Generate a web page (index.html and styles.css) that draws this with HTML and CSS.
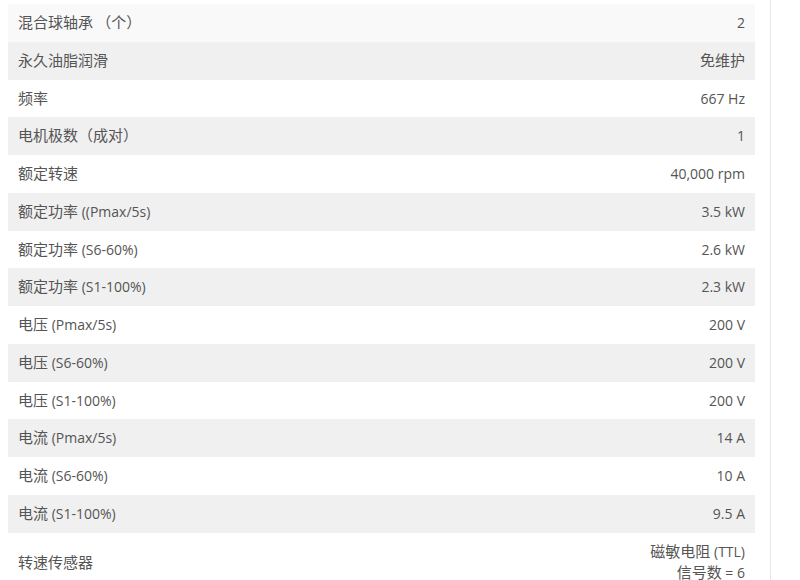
FILE: index.html
```
<!DOCTYPE html>
<html lang="zh-CN">
<head>
<meta charset="utf-8">
<link rel="stylesheet" href="styles.css">
</head>
<body>
<div class="page">
  <div class="main">
    <table class="specs">
      <tbody>
        <tr class="first"><td><span class="zh">混合球轴承 （个）</span></td><td class="val">2</td></tr>
        <tr class="alt"><td><span class="zh">永久油脂润滑</span></td><td class="val"><span class="zh">免维护</span></td></tr>
        <tr><td><span class="zh">频率</span></td><td class="val">667 Hz</td></tr>
        <tr class="alt"><td><span class="zh">电机极数（成对）</span></td><td class="val">1</td></tr>
        <tr><td><span class="zh">额定转速</span></td><td class="val">40,000 rpm</td></tr>
        <tr class="alt"><td><span class="zh">额定功率</span> ((Pmax/5s)</td><td class="val">3.5 kW</td></tr>
        <tr><td><span class="zh">额定功率</span> (S6-60%)</td><td class="val">2.6 kW</td></tr>
        <tr class="alt"><td><span class="zh">额定功率</span> (S1-100%)</td><td class="val">2.3 kW</td></tr>
        <tr><td><span class="zh">电压</span> (Pmax/5s)</td><td class="val">200 V</td></tr>
        <tr class="alt"><td><span class="zh">电压</span> (S6-60%)</td><td class="val">200 V</td></tr>
        <tr><td><span class="zh">电压</span> (S1-100%)</td><td class="val">200 V</td></tr>
        <tr class="alt"><td><span class="zh">电流</span> (Pmax/5s)</td><td class="val">14 A</td></tr>
        <tr><td><span class="zh">电流</span> (S6-60%)</td><td class="val">10 A</td></tr>
        <tr class="alt"><td><span class="zh">电流</span> (S1-100%)</td><td class="val">9.5 A</td></tr>
        <tr><td><span class="zh">转速传感器</span></td><td class="val"><span class="zh">磁敏电阻</span> (TTL)<br><span class="zh">信号数</span> = 6</td></tr>
      </tbody>
    </table>
  </div>
  <div class="side"></div>
</div>
</body>
</html>
```
FILE: styles.css
```
html, body {
  margin: 0;
  padding: 0;
  background: #fff;
}
body {
  font-family: "Open Sans", "Noto Sans CJK SC", sans-serif;
  font-size: 14px;
  color: #555;
  overflow: hidden;
}
.page {
  display: flex;
  padding: 4px 0 0 8px;
  height: 580px;
  box-sizing: border-box;
}
.main {
  width: 747px;
  flex: none;
}
.side {
  margin-left: 15px;
  border-left: 1px solid #e6e6e6;
  flex: 1;
  margin-top: -4px;
}
.specs {
  width: 100%;
  border-collapse: collapse;
}
.specs td {
  padding: 8px 10px;
  line-height: 21.77px;
  vertical-align: middle;
}
.specs td.val {
  text-align: right;
}
.zh {
  font-family: "Noto Sans CJK SC", sans-serif;
  font-size: 15px;
  line-height: 1;
}
.specs tr.first {
  background: #f9f9f9;
}
.specs tr.alt {
  background: #f0f0f0;
}
```
